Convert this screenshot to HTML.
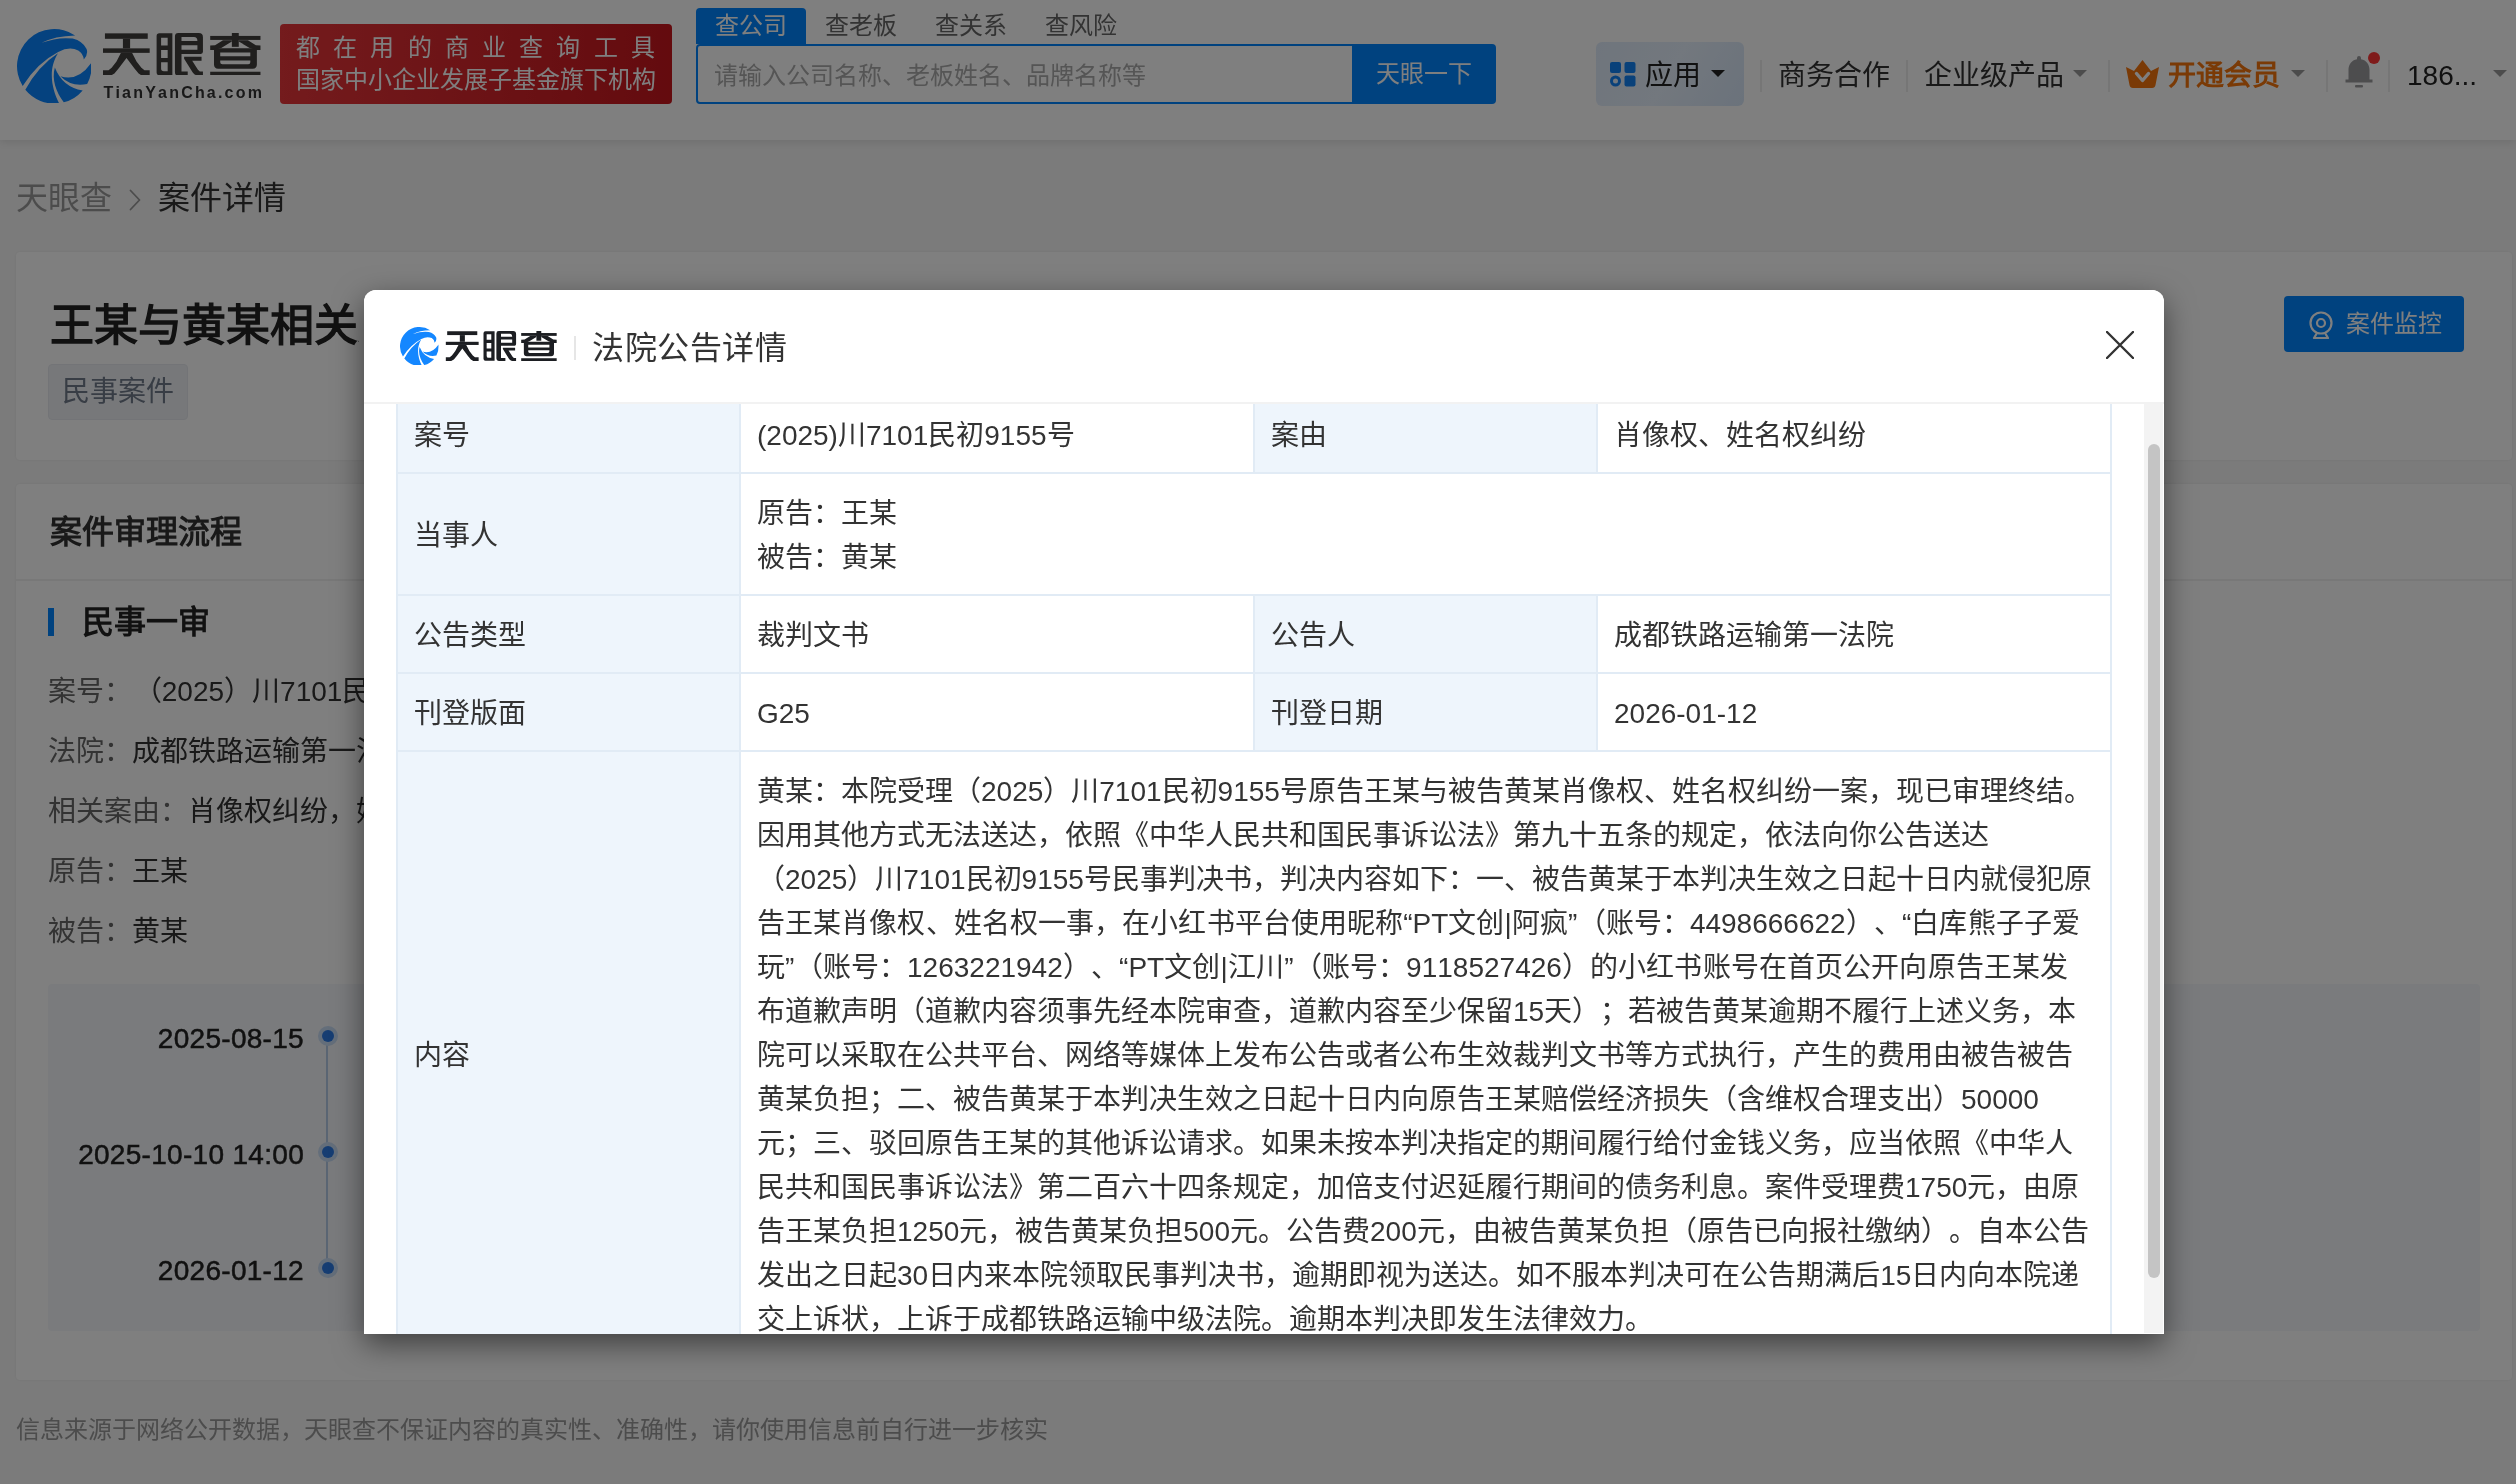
<!DOCTYPE html>
<html lang="zh-CN">
<head>
<meta charset="utf-8">
<title>案件详情 - 天眼查</title>
<style>
*{box-sizing:border-box;margin:0;padding:0}
html,body{width:2516px;height:1484px;overflow:hidden}
body{font-weight:350;text-spacing-trim:space-all;font-kerning:none;font-family:"Liberation Sans",sans-serif;background:#f6f6f6;color:#333;position:relative}
.abs{position:absolute}
.nw{white-space:nowrap}

/* ---------- header ---------- */
#hdr{position:absolute;left:0;top:0;width:2516px;height:140px;background:#fff;box-shadow:0 2px 8px rgba(0,0,0,.10)}
#lgsub{position:absolute;left:103.5px;top:82.8px;font-size:16px;font-weight:700;line-height:20px;color:#333;letter-spacing:2.2px;white-space:nowrap}
#banner{position:absolute;left:280px;top:24px;width:392px;height:80px;border-radius:4px;background:linear-gradient(90deg,#e8363a,#c8161d);color:#fff;font-size:24px;line-height:32px;padding:8px 0 0 16px;white-space:nowrap}
#banner .l1{letter-spacing:13.2px}
#tabs{position:absolute;left:696px;top:8px;height:36px;white-space:nowrap;font-size:24px;line-height:36px;color:#666}
#tabs span{display:inline-block;height:36px;width:110px;text-align:center;vertical-align:top}
#tabs span.on{background:#0084ff;color:#fff;border-radius:4px 4px 0 0}
#sbox{position:absolute;left:696px;top:44px;width:658px;height:60px;border:2px solid #0084ff;border-radius:4px 0 0 4px;background:#fff;font-size:24px;line-height:59px;color:#aaa;padding-left:16px;white-space:nowrap}
#sbtn{position:absolute;left:1352px;top:44px;width:144px;height:60px;background:#0084ff;border-radius:0 4px 4px 0;color:#fff;font-size:24px;line-height:60px;text-align:center}
.nav{position:absolute;top:43.7px;height:64px;line-height:64px;font-size:28px;color:#333;white-space:nowrap}
.sep{position:absolute;top:60px;width:2px;height:32px;background:#ececec}
.caret{position:absolute;width:0;height:0;border-left:7px solid transparent;border-right:7px solid transparent;border-top:7px solid #999}

/* ---------- page ---------- */
#crumb{position:absolute;left:16px;top:173.5px;font-size:32px;line-height:48px;color:#999;white-space:nowrap}
#crumb b{font-weight:inherit;color:#333}
.card{position:absolute;left:16px;width:2496px;background:#fff;border-radius:4px;box-shadow:0 0 2px rgba(0,0,0,.08)}

#title{position:absolute;left:50px;top:294px;width:309px;overflow:hidden;font-size:44px;font-weight:700;line-height:64px;color:#222;white-space:nowrap}
#tag{position:absolute;left:48px;top:364px;width:140px;height:56px;border-radius:4px;background:#eef1f5;border:1px solid #e6e9ee;color:#707a8a;font-size:28px;line-height:54px;text-align:center;white-space:nowrap}
#monbtn{position:absolute;left:2284px;top:296px;width:180px;height:56px;border-radius:4px;background:#0084ff;color:#fff;font-size:24px;line-height:56px;white-space:nowrap;padding-left:62px}
#h2{position:absolute;left:50px;top:508px;font-size:32px;font-weight:700;line-height:48px;color:#333;white-space:nowrap}
#h2line{position:absolute;left:16px;top:579px;width:2496px;height:2px;background:#f0f0f0}
#bar{position:absolute;left:48px;top:608px;width:6px;height:28px;background:#0084ff}
#h3{position:absolute;left:82px;top:598px;font-size:32px;font-weight:700;line-height:48px;color:#222;white-space:nowrap}
.row{position:absolute;left:48px;font-size:28px;line-height:40px;color:#666;white-space:nowrap}
.row b{font-weight:inherit;color:#333}
#tl{position:absolute;left:48px;top:984px;width:2432px;height:347px;background:#f5f7fa;border-radius:4px}
.dt{position:absolute;left:40px;width:264px;text-align:right;font-size:28px;line-height:40px;color:#222;-webkit-text-stroke:.5px #222;white-space:nowrap;letter-spacing:.3px;margin-top:1px}
.dot{position:absolute;left:318px;width:20px;height:20px;border-radius:10px;background:#c8dcf5}
.dot i{position:absolute;left:4px;top:4px;width:12px;height:12px;border-radius:6px;background:#2d7be5}
#tline{position:absolute;left:326px;top:1036px;width:2px;height:232px;background:#b4cbe6}
#foot{position:absolute;left:16px;top:1412px;font-size:24px;line-height:36px;color:#999;white-space:nowrap}

/* ---------- mask + modal ---------- */
#mask{position:absolute;left:0;top:0;width:2516px;height:1484px;background:rgba(0,0,0,.5)}
#modal{will-change:transform;position:absolute;left:364px;top:290px;width:1800px;height:1044px;background:#fff;border-radius:12px 12px 0 0;box-shadow:0 10px 30px rgba(0,0,0,.5);overflow:hidden}
#mhead{position:absolute;left:0;top:0;width:1800px;height:114px;border-bottom:2px solid #f2f2f2;background:#fff}
#msep{position:absolute;left:210px;top:46px;width:2px;height:24px;background:#e6e6e6}
#mtitle{position:absolute;left:228px;top:34.4px;font-size:32px;line-height:48px;color:#333;white-space:nowrap;letter-spacing:.6px}
#mclose{position:absolute;left:1742px;top:41.4px;width:28px;height:28px}
#mbody{position:absolute;left:0;top:114px;width:1800px;height:930px;overflow:hidden;background:#fff}
#tb{position:absolute;left:32px;top:-10px;width:1716px;border-collapse:separate;border-spacing:0;table-layout:fixed;border-right:2px solid #e1ebf5;border-top:2px solid #e1ebf5;font-size:28px;line-height:44px;color:#333}
#tb td{border-left:2px solid #e1ebf5;border-bottom:2px solid #e1ebf5;padding:17.6px 0 14.4px 16px;vertical-align:middle;overflow:hidden;white-space:nowrap;background:#fff}
#tb td.k{background:#eef5fc}
.j{display:inline-block;white-space:nowrap;text-align:justify;text-align-last:justify}
.ln{display:block;white-space:nowrap;text-align:justify;text-align-last:justify}
#strack{position:absolute;left:1780px;top:0;width:19.4px;height:929px;background:#f3f3f3}
#sthumb{position:absolute;left:1784px;top:40px;width:12px;height:834px;border-radius:6px;background:#c4c4c4}
</style>
</head>
<body>
<svg width="0" height="0" style="position:absolute">
  <defs>
    <symbol id="swirl" viewBox="150 166 670 670">
      <path d="M200.9 678.5 A335 335 0 0 1 672.3 223.3 Q490 228 370 290 Q520 235 650 252 Q740 275 775 345 Q792 392 750 440 Q745 385 700 358 Q620 320 520 372 Q330 470 200.9 678.5Z"/>
      <path d="M518 384 Q340 500 224.7 711.8 A335 335 0 0 0 528.1 833.2 C470 720 420 540 518 384Z"/>
      <path d="M490 512 C460 620 500 730 570.0 825.0 A335 335 0 0 0 740.1 718.1 Q560 690 490 512Z"/>
      <path d="M540 590 Q700 640 818.3 467.7 A335 335 0 0 1 780.0 659.8 Q640 690 540 590Z"/>
    </symbol>
    <symbol id="tyc" viewBox="105 128 2280 617">
      <rect x="133" y="133" width="619" height="79"/>
      <rect x="393" y="212" width="104" height="138"/>
      <rect x="105" y="350" width="675" height="65"/>
      <polygon points="365,415 525,415 590,540 660,630 705,668 780,668 780,745 670,745 620,715 560,640 445,490 330,640 270,715 215,745 105,745 105,668 185,668 230,630 300,540"/>
      <path fill-rule="evenodd" d="M920 133H1108V738H920Q880 738 880 698V173Q880 133 920 133Z M945 195H1040V310H945Z M945 375H1040V490H945Z M945 550H1040V680H985Q945 680 945 640Z"/>
      <path fill-rule="evenodd" d="M1195 128H1490Q1550 128 1550 188V400Q1550 430 1520 430H1240V685H1330V745H1195Q1145 745 1145 695V178Q1145 128 1195 128Z M1240 185H1420Q1470 185 1470 245H1240Z M1240 305H1470V370H1240Z"/>
      <polygon points="1278,472 1530,472 1530,530 1395,530 1478,660 1505,685 1550,685 1550,745 1465,745 1425,725 1400,695 1278,500"/>
      <rect x="1655" y="170" width="730" height="58"/>
      <rect x="1968" y="128" width="100" height="200"/>
      <polygon points="1655,310 1725,305 1840,232 1968,232 1968,250 1815,345 1720,375 1655,375"/>
      <polygon points="2385,310 2315,305 2200,232 2068,232 2068,250 2225,345 2320,375 2385,375"/>
      <path fill-rule="evenodd" d="M1710 350H2330V585Q2330 645 2270 645H1770Q1710 645 1710 585Z M1800 410H2235V465H1800Z M1800 525H2235V550Q2235 580 2205 580H1830Q1800 580 1800 550Z"/>
      <rect x="1655" y="688" width="730" height="57"/>
    </symbol>
  </defs>
</svg>

<div id="page" style="position:absolute;left:0;top:0;width:2516px;height:1484px;will-change:transform">
<!-- ================= HEADER ================= -->
<div id="hdr">
  <svg class="abs" style="left:16.7px;top:28.6px" width="74.6" height="74.6" fill="#0a84ff"><use href="#swirl"/></svg>
  <svg class="abs" style="left:103.3px;top:32.8px" width="157.7" height="42.7" fill="#403e3c" preserveAspectRatio="none"><use href="#tyc"/></svg>
  <div id="lgsub">TianYanCha.com</div>
  <div id="banner"><div class="l1"><span class="j" style="width:372.0px">都在用的商业查询工具</span></div><div><span class="j" style="width:360.0px">国家中小企业发展子基金旗下机构</span></div></div>
  <div id="tabs"><span class="on"><span class="j" style="width:72.0px">查公司</span></span><span><span class="j" style="width:72.0px">查老板</span></span><span><span class="j" style="width:72.0px">查关系</span></span><span><span class="j" style="width:72.0px">查风险</span></span></div>
  <div id="sbox"><span class="j" style="width:432.0px">请输入公司名称、老板姓名、品牌名称等</span></div>
  <div id="sbtn"><span class="j" style="width:96.0px">天眼一下</span></div>
  <!-- right nav -->
  <div class="abs" style="left:1596px;top:42px;width:148px;height:64px;border-radius:6px;background:linear-gradient(120deg,#dfebfa 0%,#e6f0fc 50%,#d6e5f7 100%)"></div>
  <svg class="abs" style="left:1610px;top:62px" width="26" height="25" viewBox="0 0 26 25">
    <rect x="0" y="0" width="11" height="11" rx="2" fill="#1283f5"/>
    <rect x="14.5" y="0" width="11" height="11" rx="2" fill="#1283f5"/>
    <rect x="14.5" y="13.5" width="11" height="11" rx="2" fill="#1283f5"/>
    <circle cx="5.5" cy="19" r="4" fill="none" stroke="#1283f5" stroke-width="3"/>
  </svg>
  <div class="nav" style="left:1645px;font-weight:500;color:#222"><span class="j" style="width:56.0px">应用</span></div>
  <div class="caret" style="left:1711px;top:70px;border-top-color:#222"></div>
  <div class="sep" style="left:1760px"></div>
  <div class="nav" style="left:1778px"><span class="j" style="width:112.0px">商务合作</span></div>
  <div class="sep" style="left:1906px"></div>
  <div class="nav" style="left:1924px"><span class="j" style="width:140.0px">企业级产品</span></div>
  <div class="caret" style="left:2073px;top:70px"></div>
  <div class="sep" style="left:2108px"></div>
  <svg class="abs" style="left:2126px;top:60px" width="33" height="28" viewBox="0 0 33 28">
    <path d="M0 7 L8 11 L16.5 0 L25 11 L33 7 L29.5 25 Q29 28 26 28 L7 28 Q4 28 3.5 25 Z" fill="#f4740c"/>
    <path d="M10.5 13.5 L16.5 20.5 L22.5 13.5" fill="none" stroke="#fff" stroke-width="3.4" stroke-linecap="round" stroke-linejoin="round"/>
  </svg>
  <div class="nav" style="left:2168px;font-weight:700;color:#f4740c"><span class="j" style="width:112.0px">开通会员</span></div>
  <div class="caret" style="left:2291px;top:70px"></div>
  <div class="sep" style="left:2326px"></div>
  <svg class="abs" style="left:2345px;top:56px" width="28" height="32" viewBox="0 0 28 32">
    <path d="M12 2 Q12 0 14 0 Q16 0 16 2 L16 3.2 C21.5 4.2 24.5 8.6 24.5 14 L24.5 23.5 L27.5 23.5 L27.5 26.5 L0.5 26.5 L0.5 23.5 L3.5 23.5 L3.5 14 C3.5 8.6 6.5 4.2 12 3.2 Z" fill="#9a9a9d"/>
    <rect x="10" y="29" width="8" height="2.6" rx="1" fill="#9a9a9d"/>
  </svg>
  <div class="abs" style="left:2368px;top:52px;width:12px;height:12px;border-radius:6px;background:#ff3636"></div>
  <div class="sep" style="left:2388px"></div>
  <div class="nav" style="left:2407px;color:#222">186...</div>
  <div class="caret" style="left:2493px;top:70px"></div>
</div>

<!-- ================= PAGE ================= -->
<div id="crumb"><span class="j" style="width:96.0px">天眼查</span><svg style="display:inline-block;vertical-align:-2px;margin:0 17.5px 0 16.5px" width="12" height="22" viewBox="0 0 12 22"><path d="M1.5 1.5 L10.5 11 L1.5 20.5" fill="none" stroke="#999" stroke-width="1.8" stroke-linecap="round" stroke-linejoin="round"/></svg><b><span class="j" style="width:128.0px">案件详情</span></b></div>
<div class="card" id="c1" style="top:252px;height:208px"></div>
<div class="card" id="c2" style="top:484px;height:896px"></div>
<div id="title"><span class="j" style="width:396.0px">王某与黄某相关案件</span></div>
<div id="tag"><span class="j" style="width:112.0px">民事案件</span></div>
<div id="monbtn"><span class="j" style="width:96.0px">案件监控</span>
  <svg class="abs" style="left:24px;top:15px" width="26" height="28" viewBox="0 0 26 28">
    <circle cx="13" cy="12" r="10.5" fill="none" stroke="#fff" stroke-width="2.2"/>
    <circle cx="13" cy="12" r="4" fill="none" stroke="#fff" stroke-width="2.2"/>
    <path d="M9 22 L6 27 L20 27 L17 22" fill="none" stroke="#fff" stroke-width="2.2" stroke-linejoin="round"/>
  </svg>
</div>
<div id="h2"><span class="j" style="width:192.0px">案件审理流程</span></div>
<div id="h2line"></div>
<div id="bar"></div>
<div id="h3"><span class="j" style="width:128.0px">民事一审</span></div>
<div class="row" style="top:672px"><span class="j" style="width:84.0px">案号：</span> <b style="margin-left:-6px"><span class="j" style="width:354.9px">（2025）川7101民初9155号</span></b></div>
<div class="row" style="top:732px"><span class="j" style="width:84.0px">法院：</span><b><span class="j" style="width:280.0px">成都铁路运输第一法院</span></b></div>
<div class="row" style="top:792px"><span class="j" style="width:140.0px">相关案由：</span><b><span class="j" style="width:308.0px">肖像权纠纷，姓名权纠纷</span></b></div>
<div class="row" style="top:852px"><span class="j" style="width:84.0px">原告：</span><b><span class="j" style="width:56.0px">王某</span></b></div>
<div class="row" style="top:912px"><span class="j" style="width:84.0px">被告：</span><b><span class="j" style="width:56.0px">黄某</span></b></div>
<div id="tl"></div>
<div id="tline"></div>
<div class="dt" style="top:1018px">2025-08-15</div><div class="dot" style="top:1026px"><i></i></div>
<div class="dt" style="top:1134px">2025-10-10 14:00</div><div class="dot" style="top:1142px"><i></i></div>
<div class="dt" style="top:1250px">2026-01-12</div><div class="dot" style="top:1258px"><i></i></div>
<div id="foot"><span class="j" style="width:1032.0px">信息来源于网络公开数据，天眼查不保证内容的真实性、准确性，请你使用信息前自行进一步核实</span></div>

</div>
<!-- ================= MASK + MODAL ================= -->
<div id="mask"></div>
<div id="modal">
  <div id="mhead">
    <svg class="abs" style="left:36px;top:36.7px" width="38.7" height="38.7" fill="#1487ff"><use href="#swirl"/></svg>
    <svg class="abs" style="left:80.8px;top:41.4px" width="112.5" height="30" fill="#1c1e22" preserveAspectRatio="none"><use href="#tyc"/></svg>
    <div id="msep"></div>
    <div id="mtitle"><span class="j" style="width:195.7px">法院公告详情</span></div>
    <svg id="mclose" viewBox="0 0 28 28"><path d="M1 1 L27 27 M27 1 L1 27" stroke="#333" stroke-width="2.4" fill="none" stroke-linecap="round"/></svg>
  </div>
  <div id="mbody">
    <table id="tb">
      <colgroup><col style="width:343px"><col style="width:514px"><col style="width:343px"><col style="width:514px"></colgroup>
      <tr><td class="k"><span class="j" style="width:56.0px">案号</span></td><td><span class="j" style="width:317.6px">(2025)川7101民初9155号</span></td><td class="k"><span class="j" style="width:56.0px">案由</span></td><td><span class="j" style="width:252.0px">肖像权、姓名权纠纷</span></td></tr>
      <tr><td class="k"><span class="j" style="width:84.0px">当事人</span></td><td colspan="3"><span class="j" style="width:140.0px">原告：王某</span><br><span class="j" style="width:140.0px">被告：黄某</span></td></tr>
      <tr><td class="k"><span class="j" style="width:112.0px">公告类型</span></td><td><span class="j" style="width:112.0px">裁判文书</span></td><td class="k"><span class="j" style="width:84.0px">公告人</span></td><td><span class="j" style="width:280.0px">成都铁路运输第一法院</span></td></tr>
      <tr><td class="k"><span class="j" style="width:112.0px">刊登版面</span></td><td>G25</td><td class="k"><span class="j" style="width:112.0px">刊登日期</span></td><td>2026-01-12</td></tr>
      <tr><td class="k"><span class="j" style="width:56.0px">内容</span></td><td colspan="3"><div class="ln" style="width:1334.9px">黄某：本院受理（2025）川7101民初9155号原告王某与被告黄某肖像权、姓名权纠纷一案，现已审理终结。</div><div class="ln" style="width:1232.0px">因用其他方式无法送达，依照《中华人民共和国民事诉讼法》第九十五条的规定，依法向你公告送达</div><div class="ln" style="width:1334.9px">（2025）川7101民初9155号民事判决书，判决内容如下：一、被告黄某于本判决生效之日起十日内就侵犯原</div><div class="ln" style="width:1322.8px">告王某肖像权、姓名权一事，在小红书平台使用昵称“PT文创|阿疯”（账号：4498666622）、“白库熊子子爱</div><div class="ln" style="width:1311.0px">玩”（账号：1263221942）、“PT文创|江川”（账号：9118527426）的小红书账号在首页公开向原告王某发</div><div class="ln" style="width:1319.2px">布道歉声明（道歉内容须事先经本院审查，道歉内容至少保留15天）；若被告黄某逾期不履行上述义务，本</div><div class="ln" style="width:1316.0px">院可以采取在公共平台、网络等媒体上发布公告或者公布生效裁判文书等方式执行，产生的费用由被告被告</div><div class="ln" style="width:1281.9px">黄某负担；二、被告黄某于本判决生效之日起十日内向原告王某赔偿经济损失（含维权合理支出）50000</div><div class="ln" style="width:1316.0px">元；三、驳回原告王某的其他诉讼请求。如果未按本判决指定的期间履行给付金钱义务，应当依照《中华人</div><div class="ln" style="width:1322.3px">民共和国民事诉讼法》第二百六十四条规定，加倍支付迟延履行期间的债务利息。案件受理费1750元，由原</div><div class="ln" style="width:1331.7px">告王某负担1250元，被告黄某负担500元。公告费200元，由被告黄某负担（原告已向报社缴纳）。自本公告</div><div class="ln" style="width:1322.3px">发出之日起30日内来本院领取民事判决书，逾期即视为送达。如不服本判决可在公告期满后15日内向本院递</div><div class="ln" style="width:896.0px">交上诉状，上诉于成都铁路运输中级法院。逾期本判决即发生法律效力。</div></td></tr>
    </table>
    <div id="strack"></div>
    <div id="sthumb"></div>
  </div>
</div>

</body>
</html>
